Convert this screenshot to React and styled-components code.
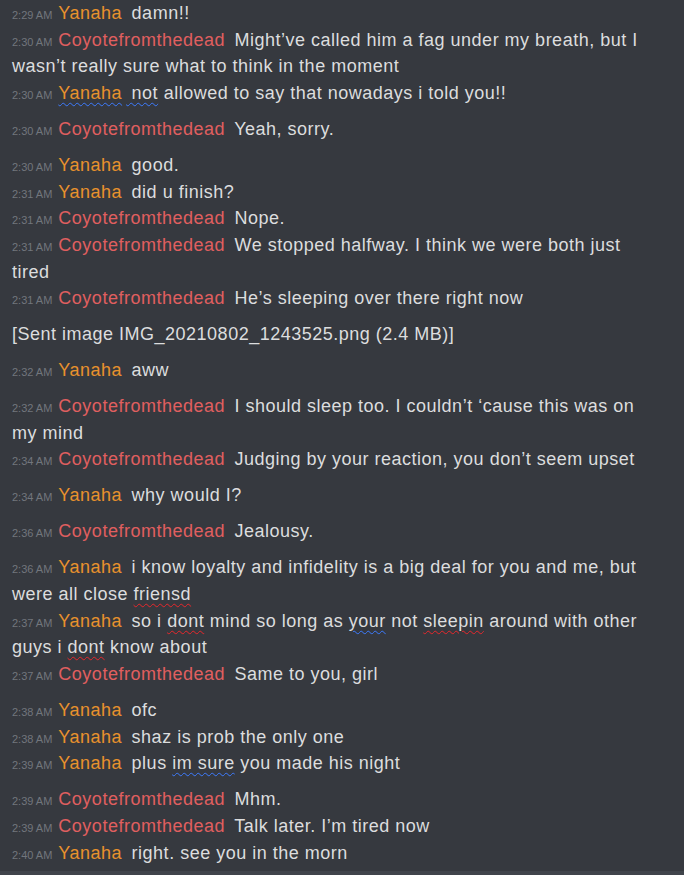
import React from "react";
import styled, { createGlobalStyle } from "styled-components";

const GlobalStyle = createGlobalStyle`
  html, body {
    margin: 0;
    padding: 0;
    background: #36393f;
  }
  body {
    font-family: "Liberation Sans", Arial, sans-serif;
  }
`;

const Page = styled.div`
  width: 684px;
  height: 875px;
  display: flex;
  flex-direction: column;
  background: #36393f;
  overflow: hidden;
`;

const Log = styled.div`
  flex: 1;
  min-height: 0;
  overflow: hidden;
  padding: 0 38px 0 12px;
  color: #dcddde;
  font-size: 18px;
  letter-spacing: 0.5px;
  line-height: 26.7px;
`;

const Group = styled.div`
  margin-bottom: 9.2px;
`;

const Line = styled.div``;

const Time = styled.span`
  font-size: 11px;
  letter-spacing: 0;
  line-height: 1;
  color: #72767d;
  margin-right: 6px;
`;

const Name = styled.span`
  color: ${(p) => (p.$who === "y" ? "#e8912d" : "#e05f5f")};
  margin-right: 4px;
`;

const Typo = styled.span`
  text-decoration: underline wavy ${(p) => (p.$kind === "grammar" ? "#3d7bff" : "#e8272b")};
  text-decoration-thickness: 1px;
  text-underline-offset: 3px;
`;

const Footer = styled.div`
  flex-shrink: 0;
  height: 4px;
  background: #40444b;
`;

const Y = "Yanaha";
const C = "Coyotefromthedead";

const groups = [
  [
    ["2:29 AM", Y, "damn!!"],
    ["2:30 AM", C, "Might\u2019ve called him a fag under my breath, but I wasn\u2019t really sure what to think in the moment"],
    ["2:30 AM", Y, "allowed to say that nowadays i told you!!", "grammarAll"],
  ],
  [["2:30 AM", C, "Yeah, sorry."]],
  [
    ["2:30 AM", Y, "good."],
    ["2:31 AM", Y, "did u finish?"],
    ["2:31 AM", C, "Nope."],
    ["2:31 AM", C, "We stopped halfway. I think we were both just tired"],
    ["2:31 AM", C, "He\u2019s sleeping over there right now"],
  ],
  [[null, null, "[Sent image IMG_20210802_1243525.png (2.4 MB)]"]],
  [["2:32 AM", Y, "aww"]],
  [
    ["2:32 AM", C, "I should sleep too. I couldn\u2019t \u2018cause this was on my mind"],
    ["2:34 AM", C, "Judging by your reaction, you don\u2019t seem upset"],
  ],
  [["2:34 AM", Y, "why would I?"]],
  [["2:36 AM", C, "Jealousy."]],
  [
    ["2:36 AM", Y, ["i know loyalty and infidelity is a big deal for you and me, but were all close ", ["s", "friensd"]]],
    ["2:37 AM", Y, ["so i ", ["s", "dont"], " mind so long as ", ["g", "your"], " not ", ["s", "sleepin"], " around with other guys i ", ["s", "dont"], " know about"]],
    ["2:37 AM", C, "Same to you, girl"],
  ],
  [
    ["2:38 AM", Y, "ofc"],
    ["2:38 AM", Y, "shaz is prob the only one"],
    ["2:39 AM", Y, ["plus ", ["g", "im sure"], " you made his night"]],
  ],
  [
    ["2:39 AM", C, "Mhm."],
    ["2:39 AM", C, "Talk later. I\u2019m tired now"],
    ["2:40 AM", Y, "right. see you in the morn"],
  ],
];

function renderText(text) {
  if (typeof text === "string") return text;
  return text.map((part, i) =>
    typeof part === "string" ? (
      part
    ) : (
      <Typo key={i} $kind={part[0] === "g" ? "grammar" : "spelling"}>
        {part[1]}
      </Typo>
    )
  );
}

function Message({ time, name, text, flag }) {
  const who = name === Y ? "y" : "c";
  if (flag === "grammarAll") {
    // the spell checker underlines the name and the first word together
    return (
      <Line>
        <Time>{time}</Time>
        <Typo $kind="grammar">
          <Name $who={who}>{name}</Name> not
        </Typo>{" "}
        {text}
      </Line>
    );
  }
  return (
    <Line>
      {time && <Time>{time}</Time>}
      {name && <Name $who={who}>{name}</Name>} {renderText(text)}
    </Line>
  );
}

export default function App() {
  return (
    <Page>
      <GlobalStyle />
      <Log>
        {groups.map((g, gi) => (
          <Group key={gi}>
            {g.map(([time, name, text, flag], i) => (
              <Message key={i} time={time} name={name} text={text} flag={flag} />
            ))}
          </Group>
        ))}
      </Log>
      <Footer />
    </Page>
  );
}
